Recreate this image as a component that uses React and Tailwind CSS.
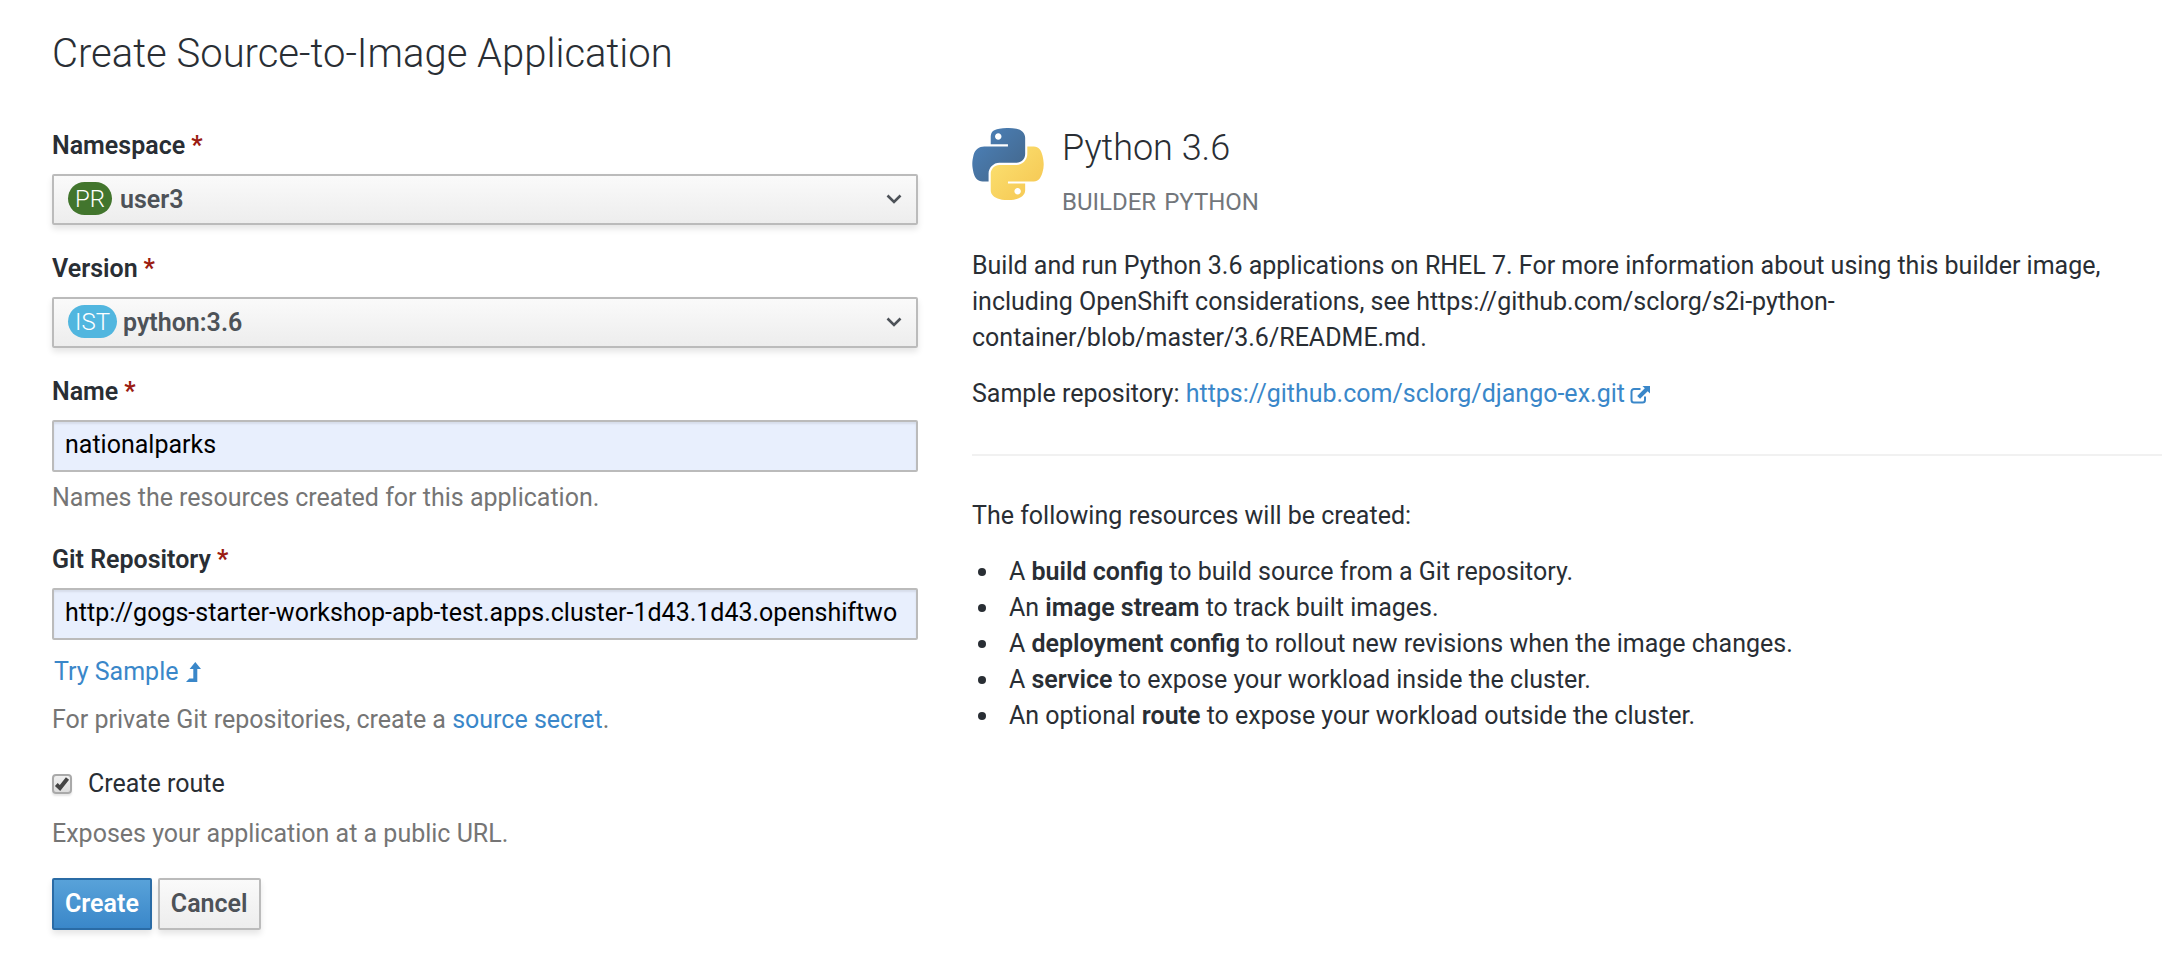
const sans = "font-['Roboto','Liberation_Sans',sans-serif]";
const link = "text-[#3a87c9] hover:underline";
const label = "font-semibold leading-9";
const help = "leading-9 text-[#757575]";

function PythonLogo() {
  return (
    <svg viewBox="12.8 2 102.4 103.2" className="size-[72px] shrink-0" aria-hidden="true">
      <defs>
        <linearGradient id="py-blue" x1="0" y1="0" x2="1" y2="1">
          <stop offset="0.1" stopColor="#4b80b8" />
          <stop offset="0.85" stopColor="#44698f" />
        </linearGradient>
        <linearGradient id="py-yellow" x1="0" y1="0" x2="1" y2="1">
          <stop offset="0.1" stopColor="#fbe070" />
          <stop offset="0.85" stopColor="#f6c955" />
        </linearGradient>
      </defs>
      <path
        fill="url(#py-blue)"
        d="M63.391 1.988c-4.222.02-8.252.379-11.8 1.007-10.45 1.846-12.346 5.71-12.346 12.837v9.411h24.693v3.137H29.977c-7.176 0-13.46 4.313-15.426 12.521-2.268 9.405-2.368 15.275 0 25.096 1.755 7.311 5.947 12.519 13.124 12.519h8.491V67.234c0-8.151 7.051-15.34 15.426-15.34h24.665c6.866 0 12.346-5.654 12.346-12.548V15.833c0-6.693-5.646-11.72-12.346-12.837-4.244-.706-8.645-1.027-12.866-1.008zM50.037 9.557c2.55 0 4.634 2.117 4.634 4.721 0 2.593-2.083 4.69-4.634 4.69-2.56 0-4.633-2.097-4.633-4.69-.001-2.604 2.073-4.721 4.633-4.721z"
      />
      <path
        fill="url(#py-yellow)"
        d="M91.682 28.38v10.966c0 8.5-7.208 15.655-15.426 15.655H51.591c-6.756 0-12.346 5.783-12.346 12.549v23.515c0 6.691 5.818 10.628 12.346 12.547 7.816 2.297 15.312 2.713 24.665 0 6.216-1.801 12.346-5.423 12.346-12.547v-9.412H63.938v-3.138h37.012c7.176 0 9.852-5.005 12.348-12.519 2.578-7.735 2.467-15.174 0-25.096-1.774-7.145-5.161-12.521-12.348-12.521h-9.268zM77.809 87.927c2.561 0 4.634 2.097 4.634 4.692 0 2.602-2.074 4.719-4.634 4.719-2.55 0-4.633-2.117-4.633-4.719 0-2.595 2.083-4.692 4.633-4.692z"
      />
    </svg>
  );
}

function ExternalIcon() {
  return (
    <svg viewBox="0 0 20 18" className="ml-[5px] inline h-[18px] w-5 align-[-2px]" aria-hidden="true">
      <path
        d="M10.500 3H4A2.500 2.500 0 0 0 1.500 5.500V14A2.500 2.500 0 0 0 4 16.500h8.500A2.500 2.500 0 0 0 15 14v-3.500"
        fill="none"
        stroke="currentColor"
        strokeWidth="2"
      />
      <path d="M12.500 0H20v7.500l-2.300-2.300-7.600 7.600-2.900-2.900 7.600-7.600z" fill="currentColor" />
    </svg>
  );
}

function LevelUpIcon() {
  return (
    <svg viewBox="0 0 15 20" className="h-5 w-[15px]" aria-hidden="true">
      <path d="M9.300 0 15 7h-3.700v13H0l3.300-3.600h4V7H3.600z" fill="currentColor" />
    </svg>
  );
}

function Required() {
  return <span className="ml-1.5 font-bold text-[#9b1c12]">*</span>;
}

function Picker({ id, text, badge, badgeColor, value, inset }) {
  return (
    <div className="flex flex-col">
      <label htmlFor={id} className={label}>
        {text}
        <Required />
      </label>
      <div className="relative mt-2.5 flex items-center">
        <select
          id={id}
          defaultValue={value}
          className={`h-[51px] w-full appearance-none rounded-[2px] border-2 border-[#bbb] bg-gradient-to-b from-[#fafafa] to-[#ededed] pr-12 font-semibold text-[#4d5258] shadow-[0_4px_6px_rgba(3,3,3,0.1)] ${inset}`}
        >
          <option>{value}</option>
        </select>
        <span
          className={`pointer-events-none absolute left-4 top-2 h-[33px] rounded-full px-[7px] text-2xl font-light leading-[34px] text-white ${badgeColor}`}
        >
          {badge}
        </span>
        <svg viewBox="0 0 16 10" className="pointer-events-none absolute right-4 top-5 h-[10px] w-4" aria-hidden="true">
          <path d="M1.500 1.500 8 8l6.500-6.500" fill="none" stroke="#4d5258" strokeWidth="2.600" />
        </svg>
      </div>
    </div>
  );
}

function TextField({ id, text, value, children }) {
  return (
    <div className="flex flex-col">
      <label htmlFor={id} className={label}>
        {text}
        <Required />
      </label>
      <input
        id={id}
        type="text"
        defaultValue={value}
        className="mt-2.5 h-[52px] w-full rounded-[2px] border-2 border-[#bbb] bg-[#e8effd] px-[11px] pb-1 text-black shadow-[inset_0_2px_2px_rgba(3,3,3,0.08)]"
      />
      {children}
    </div>
  );
}

const resources = [
  ["A", "build config", "to build source from a Git repository."],
  ["An", "image stream", "to track built images."],
  ["A", "deployment config", "to rollout new revisions when the image changes."],
  ["A", "service", "to expose your workload inside the cluster."],
  ["An optional", "route", "to expose your workload outside the cluster."],
];

export default function App() {
  return (
    <main className={`min-h-screen bg-white pb-12 pl-[52px] pt-[30px] text-[25px] text-[#292e34] ${sans}`}>
      <h1 className="text-[40px] font-light leading-[48px]">Create Source-to-Image Application</h1>

      <div className="mt-[50px] grid grid-cols-[433fr_595fr] gap-[54px]">
        <form onSubmit={(e) => e.preventDefault()}>
          <div className="flex flex-col gap-[26px]">
            <Picker id="namespace" text="Namespace" badge="PR" badgeColor="bg-[#42752d]" value="user3" inset="pl-[66px]" />
            <Picker id="version" text="Version" badge="IST" badgeColor="bg-[#51b6df]" value="python:3.6" inset="pl-[69px]" />
            <TextField id="name" text="Name" value="nationalparks">
              <p className={`mt-2 ${help}`}>Names the resources created for this application.</p>
            </TextField>
            <TextField
              id="repo"
              text="Git Repository"
              value="http://gogs-starter-workshop-apb-test.apps.cluster-1d43.1d43.openshiftwo"
            >
              <button type="button" className={`mt-[14px] flex items-center gap-2 self-start pl-0.5 leading-9 ${link}`}>
                Try Sample
                <LevelUpIcon />
              </button>
              <p className={`mt-3 ${help}`}>
                For private Git repositories, create a{" "}
                <a href="#secret" className={link}>
                  source secret
                </a>
                .
              </p>
            </TextField>
          </div>

          <div className="mt-7 flex items-center">
            <span className="relative flex">
              <input
                id="route"
                type="checkbox"
                defaultChecked
                className="size-5 appearance-none rounded-[4px] border-2 border-[#a9a9a9] bg-gradient-to-b from-[#f0f0f0] to-[#dcdcdc] shadow-[0_2px_2px_rgba(0,0,0,0.1)]"
              />
              <svg viewBox="0 0 20 20" className="pointer-events-none absolute inset-0 size-5" aria-hidden="true">
                <path d="M4.300 10.500 8 14l7.500-9.500" fill="none" stroke="#444" strokeWidth="4" />
              </svg>
            </span>
            <label htmlFor="route" className="pl-4 leading-9">
              Create route
            </label>
          </div>
          <p className={`mt-[14px] ${help}`}>Exposes your application at a public URL.</p>

          <div className="mt-[26px] flex gap-1.5">
            <button
              type="submit"
              className="h-[52px] rounded-[2px] border-2 border-[#2a6ba5] bg-gradient-to-b from-[#58a2d9] to-[#3a87c9] px-[11px] font-semibold text-white shadow-[0_4px_6px_rgba(3,3,3,0.1)]"
            >
              Create
            </button>
            <button
              type="button"
              className="h-[52px] rounded-[2px] border-2 border-[#bbb] bg-gradient-to-b from-[#fafafa] to-[#ededed] px-[11px] font-semibold text-[#4d5258] shadow-[0_4px_6px_rgba(3,3,3,0.1)]"
            >
              Cancel
            </button>
          </div>
        </form>

        <section>
          <div className="flex gap-[18px]">
            <PythonLogo />
            <div>
              <h2 className="text-[36px] font-light leading-10">Python 3.6</h2>
              <p className="mt-4 flex gap-2 text-2xl leading-9 text-[#72767b]">
                <span>BUILDER</span>
                <span>PYTHON</span>
              </p>
            </div>
          </div>
          <p className="mt-7 pr-14 leading-9">
            Build and run Python 3.6 applications on RHEL 7. For more information about using this builder image,
            including OpenShift considerations, see https://github.com/sclorg/s2i-python-container/blob/master/3.6/README.md.
          </p>
          <p className="mt-5 leading-9">
            Sample repository:{" "}
            <a href="https://github.com/sclorg/django-ex.git" className={link}>
              https://github.com/sclorg/django-ex.git
              <ExternalIcon />
            </a>
          </p>
          <hr className="my-[42px] border-t-2 border-[#f1f1f1]" />
          <p className="leading-9">The following resources will be created:</p>
          <ul className="mt-5 leading-9">
            {resources.map(([article, name, rest]) => (
              <li
                key={name}
                className="flex items-center gap-[23px] pl-1.5 before:size-2 before:shrink-0 before:rounded-full before:bg-[#292e34] before:content-['']"
              >
                <span>
                  {article} <strong className="font-semibold">{name}</strong> {rest}
                </span>
              </li>
            ))}
          </ul>
        </section>
      </div>
    </main>
  );
}
